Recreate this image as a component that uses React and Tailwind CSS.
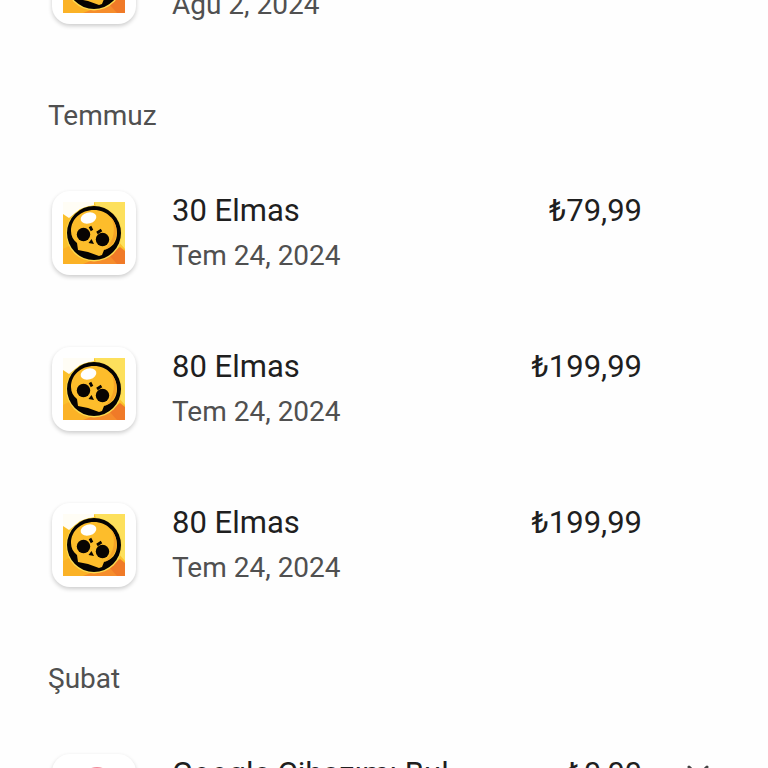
import { X } from "lucide-react";

const sections = [
  {
    purchases: [{ date: "Ağu 2, 2024", icon: "skull" }],
  },
  {
    month: "Temmuz",
    purchases: [
      { title: "30 Elmas", date: "Tem 24, 2024", price: "₺79,99", icon: "skull" },
      { title: "80 Elmas", date: "Tem 24, 2024", price: "₺199,99", icon: "skull" },
      { title: "80 Elmas", date: "Tem 24, 2024", price: "₺199,99", icon: "skull" },
    ],
  },
  {
    month: "Şubat",
    purchases: [
      { title: "Google Cihazımı Bul", price: "₺0,00", icon: "finder", removable: true },
    ],
  },
];

function SkullIcon() {
  return (
    <svg viewBox="0 0 62 62" className="h-[62px] w-[62px]" aria-hidden="true">
      <rect width="62" height="62" fill="#fbc02b" />
      <path d="M31 0H62V47L48 31Z" fill="#fde05c" />
      <path d="M0 0H31V4L16 8L6 16L0 12Z" fill="#fffdf5" />
      <path d="M31 3L17 7L7 16L14 18L31 8Z" fill="#fdd94e" />
      <path d="M0 47L10 42L30 62H0Z" fill="#fbb226" />
      <path d="M40 62L44 54L57 45L62 49V62Z" fill="#f07a28" />
      <path d="M20 62L33 57L46 53L54 62Z" fill="#f68d2b" />
      <circle cx="31" cy="31.5" r="28" fill="#fdd94e" />
      <circle cx="31" cy="31" r="27" fill="#050302" />
      <path
        d="M31 8C18 8 8 17 8 29C8 34 10 38 14 41L15 48L25 50L36 54L39 53L41 48C49 46 54 40 54 31C54 18 44 8 31 8Z"
        fill="#fdbd2b"
      />
      <path d="M48 15C56 25 56 38 45 46L42 48C52 37 53 26 48 15Z" fill="#f6a426" />
      <ellipse cx="25.500" cy="16" rx="8" ry="5.500" fill="#fff" transform="rotate(-16 25.500 16)" />
      <circle cx="20.500" cy="32.500" r="6.700" fill="#080402" />
      <circle cx="39.500" cy="37.500" r="6.700" fill="#080402" />
      <path d="M28.500 37L31 42L25.500 41Z" fill="#080402" />
      <path d="M27 24.500L29 28.500M38.500 28L34 31" stroke="#080402" strokeWidth="2.800" />
    </svg>
  );
}

function FinderIcon() {
  return (
    <svg viewBox="0 0 62 62" className="h-[62px] w-[62px]" aria-hidden="true">
      <circle cx="34" cy="18" r="16" fill="#f28b9a" />
      <circle cx="34" cy="18" r="8" fill="#fff" />
    </svg>
  );
}

function Purchase({ title, date, price, icon, removable }) {
  return (
    <li className="flex h-[156px] items-center">
      <div className="flex w-[92px] shrink-0 justify-center">
        <div className="flex h-[84px] w-[84px] items-center justify-center rounded-[18px] bg-white shadow-[0_2px_4px_rgba(0,0,0,0.2)]">
          {icon === "skull" ? <SkullIcon /> : <FinderIcon />}
        </div>
      </div>
      <div className="ml-8 min-w-0 flex-1">
        <h3 className="h-[45px] truncate text-[31px] leading-[45px] text-[#1f1f1f]">{title}</h3>
        <p className="h-[45px] text-[28px] leading-[45px] text-[#505050]">{date}</p>
      </div>
      <p className="h-[90px] text-[31px] leading-[45px] text-[#1f1f1f]">{price}</p>
      <div className="flex h-[90px] w-[78px] shrink-0 justify-end">
        {removable && (
          <button
            type="button"
            aria-label="Kaldır"
            className="flex h-[50px] w-11 items-center justify-center text-[#444]"
          >
            <X size={36} strokeWidth={2} />
          </button>
        )}
      </div>
    </li>
  );
}

export default function App() {
  return (
    <main className="h-screen overflow-hidden bg-[#fefefe] font-['Roboto',sans-serif]">
      <div className="-mt-24 px-12">
        {sections.map((section, index) => (
          <section key={index}>
            {section.month && (
              <h2 className="h-[95px] pt-9 text-[28px] leading-10 text-[#505050]">
                {section.month}
              </h2>
            )}
            <ul>
              {section.purchases.map((purchase, i) => (
                <Purchase key={i} {...purchase} />
              ))}
            </ul>
          </section>
        ))}
      </div>
    </main>
  );
}
